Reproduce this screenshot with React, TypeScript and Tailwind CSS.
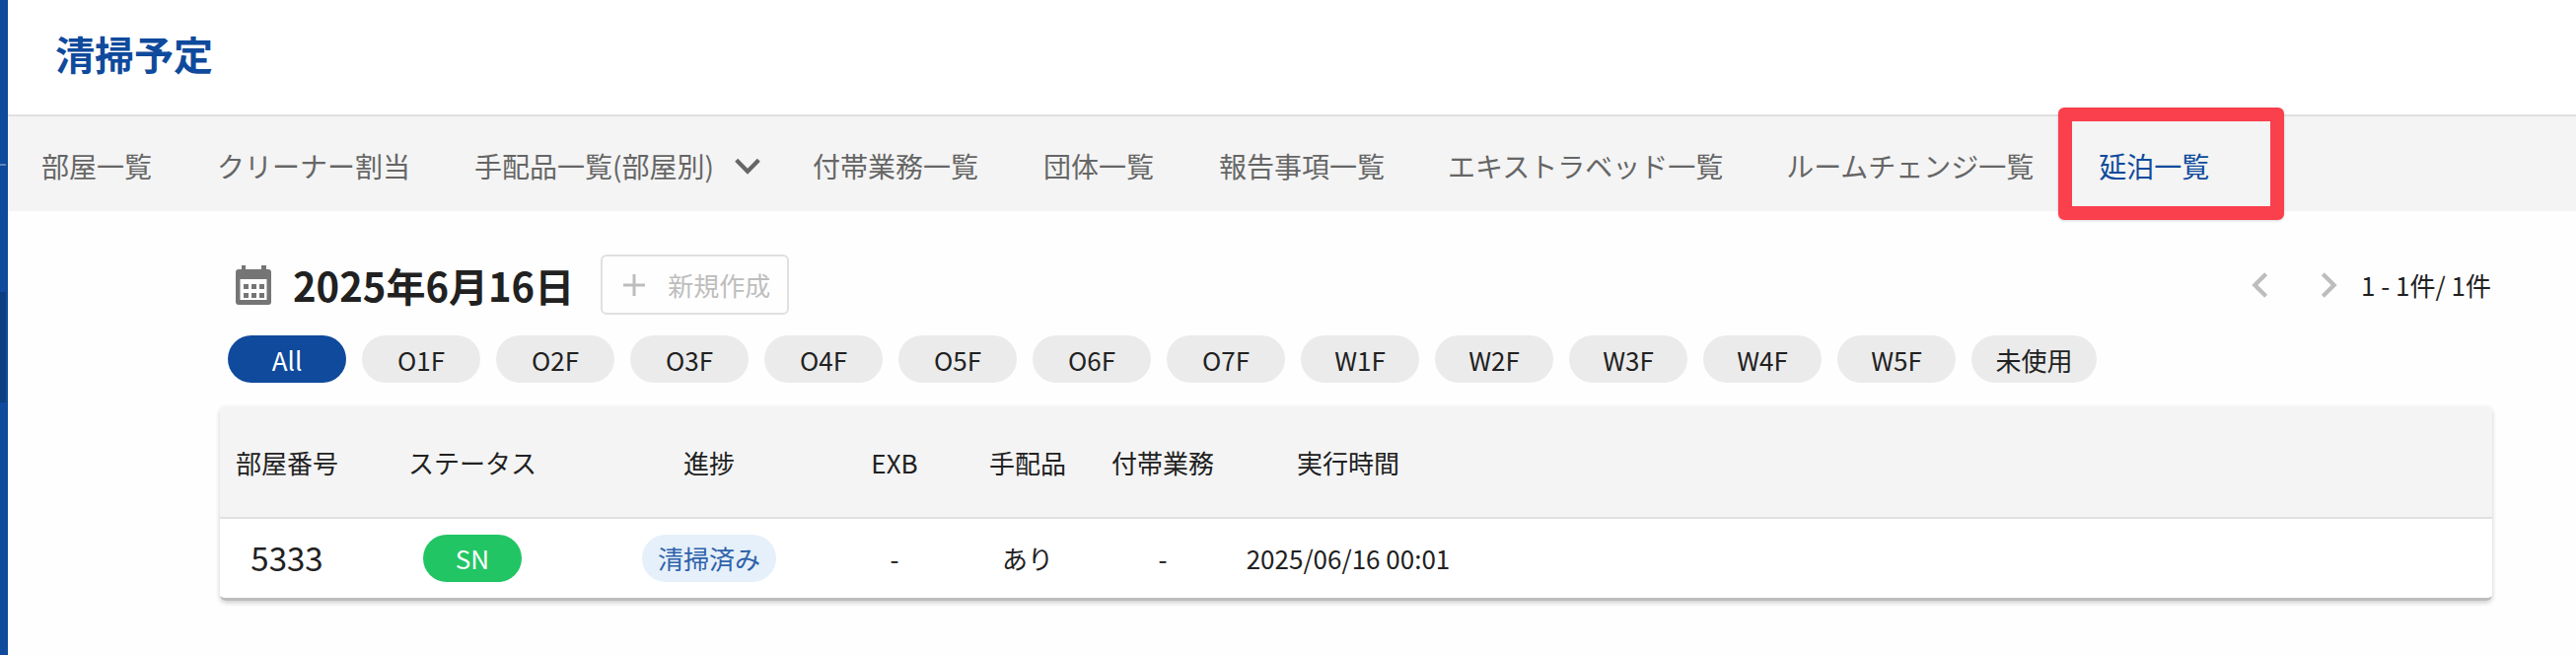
const font = { fontFamily: '"Noto Sans CJK JP", sans-serif' };
const floors = ["O1F","O2F","O3F","O4F","O5F","O6F","O7F","W1F","W2F","W3F","W4F","W5F"];
const cols = "grid grid-cols-[136px_240px_240px_136px_134px_140px_236px] items-center justify-items-center";

function Chevron({ dir, cls }: { dir: "l" | "r" | "d"; cls: string }) {
  const d = dir === "l" ? "M16 4L8 12L16 20" : dir === "r" ? "M8 4L16 12L8 20" : "M4 8L12 16L20 8";
  return (
    <svg viewBox="0 0 24 24" className={cls} fill="none" stroke="currentColor" strokeWidth="3">
      <path d={d} />
    </svg>
  );
}

export default function App() {
  return (
    <div className="flex h-[664px] w-[2612px] overflow-hidden bg-white text-[#212121]" style={font}>
      <aside className="relative h-full w-2 shrink-0 bg-[#0f4a9c]">
        <div className="absolute left-0 top-[166px] h-[2px] w-[6px] bg-[#5f86bd]" />
        <div className="absolute left-0 top-[296px] h-[112px] w-[6px] bg-[#0c3f80]" />
      </aside>
      <main className="min-w-0 flex-1">
        <header className="flex h-[118px] items-center border-b-2 border-[#e0e0e0] pl-[48px]">
          <h1 className="text-[40px] font-bold leading-none text-[#0f4a9c] -mt-[8px]">清掃予定</h1>
        </header>
        <nav className="relative flex h-[96px] items-center bg-[#f4f4f4] pl-[34px] pt-[3px] text-[28px] leading-none text-[#666666]">
          <span>部屋一覧</span>
          <span className="ml-[66px]">クリーナー割当</span>
          <span className="ml-[65px]">手配品一覧(部屋別)</span>
          <Chevron dir="d" cls="ml-[17px] h-[34px] w-[34px] text-[#666666]" />
          <span className="ml-[49px]">付帯業務一覧</span>
          <span className="ml-[66px]">団体一覧</span>
          <span className="ml-[66px]">報告事項一覧</span>
          <span className="ml-[64px]">エキストラベッド一覧</span>
          <span className="ml-[64px]">ルームチェンジ一覧</span>
          <span className="ml-[66px] text-[#0f4a9c]">延泊一覧</span>
          <div className="absolute left-[2079px] top-[-9px] h-[114px] w-[229px] rounded-[6px] border-[14px] border-[#fa3f4d] shadow-[0_1px_3px_rgba(0,0,0,0.15)]" />
        </nav>
        <section className="bg-[#fefefe] pb-[60px] pl-[215px] pr-[85px] pt-[44px]">
          <div className="flex h-[61px] items-center justify-between pl-[16px] pr-[1px]">
            <div className="flex items-center">
              <svg viewBox="0 0 36 40" className="h-[40px] w-[36px] text-[#757575]" fill="currentColor">
                <path d="M6 0h4v4h16V0h5v4h2a3 3 0 0 1 3 3v30a3 3 0 0 1-3 3H3a3 3 0 0 1-3-3V7a3 3 0 0 1 3-3h3z" />
                <path fill="#fff" d="M4.500 14h27v21h-27z" />
                <path d="M8 19h5v5H8zM16 19h5v5h-5zM24 19h5v5h-5zM8 28h5v5H8zM16 28h5v5h-5zM24 28h5v5h-5z" />
              </svg>
              <span className="ml-[22px] text-[40px] font-bold leading-none">2025年6月16日</span>
              <button className="ml-[27px] flex h-[61px] w-[191px] items-center rounded-[6px] border-2 border-[#e0e0e0] pl-[21px] text-[26px] leading-none text-[#bdbdbd]">
                <svg viewBox="0 0 22 22" className="h-[22px] w-[22px]" stroke="currentColor" strokeWidth="3"><path d="M11 0v22M0 11h22" /></svg>
                <span className="ml-[23px]">新規作成</span>
              </button>
            </div>
            <div className="flex items-center">
              <Chevron dir="l" cls="h-[34px] w-[34px] text-[#bdbdbd]" />
              <Chevron dir="r" cls="ml-[35px] h-[34px] w-[34px] text-[#bdbdbd]" />
              <span className="ml-[16px] text-[26px] leading-none">1 - 1件/ 1件</span>
            </div>
          </div>
          <div className="mt-[21px] flex h-[48px] gap-4 pl-[8px] text-[26px]">
            <span className="flex w-[120px] items-center justify-center rounded-full bg-[#0f4a9c] text-white">All</span>
            {floors.map((f) => (
              <span key={f} className="flex w-[120px] items-center justify-center rounded-full bg-[#ebebeb]">{f}</span>
            ))}
            <span className="flex w-[127px] items-center justify-center rounded-full bg-[#ebebeb]">未使用</span>
          </div>
          <div className="mt-[24px] overflow-hidden rounded-[6px] border-b-[3px] border-[#bdbdbd] shadow-[0_2px_5px_rgba(0,0,0,0.2)]">
            <div className={`${cols} h-[114px] border-b-2 border-[#e0e0e0] bg-[#f4f4f4] pt-[2px] text-[26px] leading-none`}>
              <span>部屋番号</span>
              <span>ステータス</span>
              <span>進捗</span>
              <span>EXB</span>
              <span>手配品</span>
              <span>付帯業務</span>
              <span>実行時間</span>
            </div>
            <div className={`${cols} h-[80px] bg-white text-[26px] leading-none`}>
              <span className="-mt-[2px] text-[33px]">5333</span>
              <span className="flex h-[48px] w-[100px] items-center justify-center rounded-full bg-[#22c564] text-white">SN</span>
              <span className="flex h-[48px] w-[136px] items-center justify-center rounded-full bg-[#e6f0fa] text-[#2f62ab]">清掃済み</span>
              <span>-</span>
              <span>あり</span>
              <span>-</span>
              <span>2025/06/16 00:01</span>
            </div>
          </div>
        </section>
      </main>
    </div>
  );
}
